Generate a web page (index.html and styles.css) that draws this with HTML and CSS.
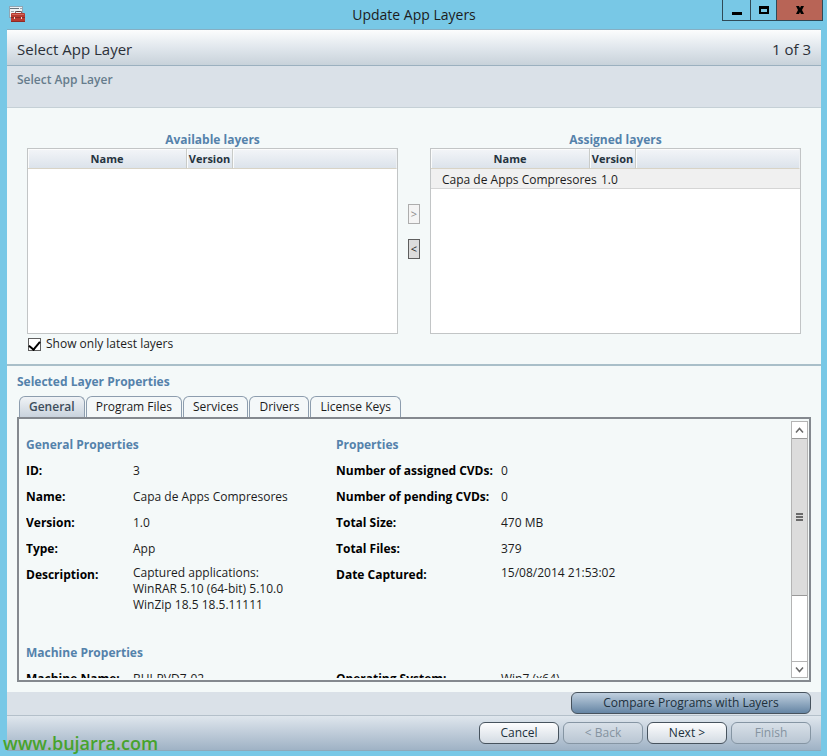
FILE: index.html
```
<!DOCTYPE html>
<html lang="en">
<head>
    <meta charset="UTF-8">
    <meta name="viewport" content="width=device-width, initial-scale=1.0">
    <title>Update App Layers</title>
    <link rel="stylesheet" href="styles.css">
</head>
<body>
    <div class="window">
        <!-- Title bar -->
        <header class="titlebar">
            <svg class="app-icon" width="18" height="18" viewBox="0 0 18 18" aria-hidden="true">
                <rect x="0.5" y="0.5" width="13" height="11" fill="#eef2f5" stroke="#8fa6b4"/>
                <path d="M1 2.5h9" stroke="#68737c"/>
                <path d="M11 2.5h2M2 5.5h3M6 5.5h7M2 8.5h3" stroke="#9aa5ad"/>
                <path d="M6.5 8V6.5q0-1 1-1h4q1 0 1 1V8" fill="none" stroke="#5b3a3c"/>
                <rect x="2" y="7" width="14" height="9" rx="1" fill="#b8392f"/>
                <path d="M3 8.5h12" stroke="#d06a5e"/>
                <path d="M2 11.5h14" stroke="#8a2c27"/>
                <path d="M5 11h1v2H5zM12 11h1v2h-1z" fill="#f0d9d0"/>
                <path d="M2 15.5h14" stroke="#8f2a26"/>
            </svg>
            <h1>Update App Layers</h1>
            <div class="window-buttons">
                <button type="button" class="minimize" aria-label="Minimize">
                    <svg width="12" height="12" viewBox="0 0 12 12"><path d="M1 8h10v3H1z"/></svg>
                </button>
                <button type="button" class="maximize" aria-label="Maximize">
                    <svg width="12" height="12" viewBox="0 0 12 12"><path fill-rule="evenodd" d="M1 2h10v8H1zM3 5v3h6V5z"/></svg>
                </button>
                <button type="button" class="close" aria-label="Close">
                    <svg width="12" height="12" viewBox="0 0 12 12"><path d="M2 2h3l1 2 1-2h3L8 6l2 4H7L6 8l-1 2H2l2-4z"/></svg>
                </button>
            </div>
        </header>

        <main class="wizard">
            <div class="step-header">
                <h2>Select App Layer</h2>
                <span>1 of 3</span>
            </div>
            <div class="step-description">Select App Layer</div>

            <!-- Layer lists -->
            <section class="layers">
                <div class="layer-list">
                    <h3 id="available-title">Available layers</h3>
                    <div class="list-box">
                        <table aria-labelledby="available-title">
                            <thead>
                                <tr>
                                    <th class="col-name">Name</th>
                                    <th class="col-version">Version</th>
                                    <th></th>
                                </tr>
                            </thead>
                        </table>
                    </div>
                    <div class="latest">
                        <input type="checkbox" id="latest" checked>
                        <label for="latest">Show only latest layers</label>
                    </div>
                </div>

                <div class="move-buttons">
                    <button type="button" aria-label="Assign layer" disabled>&gt;</button>
                    <button type="button" aria-label="Remove layer">&lt;</button>
                </div>

                <div class="layer-list">
                    <h3 id="assigned-title">Assigned layers</h3>
                    <div class="list-box">
                        <table aria-labelledby="assigned-title">
                            <thead>
                                <tr>
                                    <th class="col-name">Name</th>
                                    <th class="col-version">Version</th>
                                    <th></th>
                                </tr>
                            </thead>
                            <tbody>
                                <tr>
                                    <td>Capa de Apps Compresores</td>
                                    <td>1.0</td>
                                    <td></td>
                                </tr>
                            </tbody>
                        </table>
                    </div>
                </div>
            </section>

            <!-- Properties of the selected layer -->
            <section class="properties">
                <h3>Selected Layer Properties</h3>
                <div class="tabs" role="tablist">
                    <button type="button" role="tab" aria-selected="true" class="tab active">General</button>
                    <button type="button" role="tab" aria-selected="false" class="tab">Program Files</button>
                    <button type="button" role="tab" aria-selected="false" class="tab">Services</button>
                    <button type="button" role="tab" aria-selected="false" class="tab">Drivers</button>
                    <button type="button" role="tab" aria-selected="false" class="tab">License Keys</button>
                </div>
                <div class="panel" role="tabpanel">
                    <div class="panel-content">
                        <div class="group general">
                            <h3>General Properties</h3>
                            <dl>
                                <dt>ID:</dt><dd>3</dd>
                                <dt>Name:</dt><dd>Capa de Apps Compresores</dd>
                                <dt>Version:</dt><dd>1.0</dd>
                                <dt>Type:</dt><dd>App</dd>
                                <dt>Description:</dt>
                                <dd class="top">Captured applications:<br>WinRAR 5.10 (64-bit) 5.10.0<br>WinZip 18.5 18.5.11111</dd>
                            </dl>
                        </div>
                        <div class="group details">
                            <h3>Properties</h3>
                            <dl>
                                <dt>Number of assigned CVDs:</dt><dd>0</dd>
                                <dt>Number of pending CVDs:</dt><dd>0</dd>
                                <dt>Total Size:</dt><dd>470 MB</dd>
                                <dt>Total Files:</dt><dd>379</dd>
                                <dt>Date Captured:</dt><dd class="top">15/08/2014 21:53:02</dd>
                            </dl>
                        </div>
                        <div class="group general">
                            <h3>Machine Properties</h3>
                            <dl>
                                <dt>Machine Name:</dt><dd>BUJ-PVD7-02</dd>
                            </dl>
                        </div>
                        <div class="group details untitled">
                            <dl>
                                <dt>Operating System:</dt><dd>Win7 (x64)</dd>
                            </dl>
                        </div>
                    </div>
                    <div class="scrollbar">
                        <button type="button" aria-label="Scroll up">
                            <svg width="9" height="7" viewBox="0 0 9 7"><path d="M1 5.5l3.5-4 3.5 4"/></svg>
                        </button>
                        <div class="track">
                            <div class="thumb"><i></i><i></i><i></i></div>
                        </div>
                        <button type="button" aria-label="Scroll down">
                            <svg width="9" height="7" viewBox="0 0 9 7"><path d="M1 1.5l3.5 4 3.5-4"/></svg>
                        </button>
                    </div>
                </div>
            </section>

            <div class="compare-bar">
                <button type="button" class="button compare">Compare Programs with Layers</button>
            </div>

            <footer class="wizard-footer">
                <button type="button" class="button">Cancel</button>
                <button type="button" class="button" disabled>&lt; Back</button>
                <button type="button" class="button">Next &gt;</button>
                <button type="button" class="button" disabled>Finish</button>
            </footer>
        </main>

        <div class="site-mark">www.bujarra.com</div>
    </div>
</body>
</html>
```
FILE: styles.css
```
/* General */
* {
    box-sizing: border-box;
}

body {
    margin: 0;
    font-family: "Open Sans", "Noto Sans", sans-serif;
    font-size: 12px;
    line-height: 16px;
    color: #1c1c1c;
}

h1, h2, h3, dl, dd {
    margin: 0;
}

h3 {
    font-size: 12px;
    font-weight: 700;
    color: #5482ab;
}

button {
    font: inherit;
    color: inherit;
    padding: 0;
}

/* Window */
.window {
    position: relative;
    display: flex;
    flex-direction: column;
    height: 100vh;
    min-height: 600px;
    padding: 0 6px 5px 7px;
    background: #78c8e6;
}

.titlebar {
    display: grid;
    grid-template-columns: 104px 1fr 104px;
    height: 30px;
    border-bottom: 1px solid #86afc3;
}

.app-icon {
    margin: 6px 0 0 2px;
}

.titlebar h1 {
    font-size: 14px;
    font-weight: 400;
    line-height: 30px;
    text-align: center;
}

.window-buttons {
    display: flex;
    height: 21px;
    margin-left: 5px;
    margin-right: -2px;
}

.window-buttons button {
    display: flex;
    align-items: center;
    justify-content: center;
    border: 1px solid #2f4a57;
    border-top: 0;
    border-right: 0;
    background: none;
}

.window-buttons .minimize {
    width: 28px;
}

.window-buttons .maximize {
    width: 26px;
}

.window-buttons .close {
    flex: 1;
    border-right: 1px solid #2f4a57;
    background: #b86456;
}

/* Wizard */
.wizard {
    flex: 1;
    min-height: 0;
    display: flex;
    flex-direction: column;
    background: #f4f9f9;
}

.step-header {
    display: flex;
    justify-content: space-between;
    align-items: center;
    height: 36px;
    padding: 2px 10px 0;
    font-size: 15px;
    color: #2b3038;
    border-bottom: 1px solid #9bb0bf;
    background: linear-gradient(#fcfdfd, #e1e7ed 50%, #c8d2da);
}

.step-header h2 {
    font-size: 15px;
    font-weight: 400;
}

.step-description {
    height: 42px;
    padding: 6px 10px;
    font-weight: 600;
    color: #667c8c;
    border-bottom: 1px solid #c5d0d6;
    background: #dae1e8;
}

/* Layer lists */
.layers {
    display: grid;
    grid-template-columns: 1fr 32px 1fr;
    padding: 23px 20px 10px;
    border-bottom: 2px solid #a9bfc9;
}

.layer-list h3 {
    text-align: center;
    line-height: 17px;
}

.list-box {
    height: 186px;
    border: 1px solid #c2c5c6;
    background: #fff;
}

.list-box table {
    width: 100%;
    table-layout: fixed;
    border-collapse: separate;
    border-spacing: 0;
}

.list-box th {
    height: 20px;
    padding: 0;
    font-size: 11px;
    font-weight: 700;
    color: #253340;
    border-right: 1px solid #c9cbc8;
    border-bottom: 1px solid #d8d3c6;
    background: linear-gradient(#f3f5f8, #dce3eb);
    box-shadow: inset 1px 1px 0 #fbfcfc;
}

.list-box th:last-child {
    border-right-color: #eef1f4;
}

.col-name {
    width: 159px;
}

.col-version {
    width: 46px;
}

.list-box td {
    height: 20px;
    padding: 2px 0 0 11px;
    white-space: nowrap;
    border-bottom: 1px solid #d5d5d5;
    background: #f0f0f0;
}

.latest {
    display: flex;
    align-items: center;
    gap: 5px;
    height: 20px;
    padding-left: 1px;
}

.latest input {
    appearance: none;
    display: grid;
    place-items: center;
    width: 13px;
    height: 13px;
    margin: 0;
    border: 1px solid #606060;
    background: #fff;
}

.latest input:checked::before {
    content: "";
    width: 5px;
    height: 9px;
    margin-bottom: 2px;
    border: solid #000;
    border-width: 0 2px 2px 0;
    transform: rotate(40deg);
}

.move-buttons {
    display: flex;
    flex-direction: column;
    align-items: center;
    gap: 15px;
    padding-top: 73px;
}

.move-buttons button {
    width: 12px;
    height: 20px;
    font-size: 11px;
    line-height: 18px;
    border: 1px solid #5e5e5e;
    background: #dcdcdc;
}

.move-buttons button:disabled {
    color: #8a8a8a;
    border-color: #adadad;
    background: #f4f4f4;
}

/* Properties */
.properties {
    flex: 1;
    min-height: 0;
    display: flex;
    flex-direction: column;
    padding: 8px 10px 10px;
}

.tabs {
    display: flex;
    gap: 1px;
    height: 21px;
    margin-top: 6px;
    padding-left: 2px;
}

.tab {
    padding: 0 9px;
    border: 1px solid #8d9dae;
    border-bottom: 0;
    border-radius: 6px 6px 0 0;
    background: #f4f8f9;
}

.tab.active {
    font-weight: 600;
    color: #3d4c5a;
    background: linear-gradient(#f0f3f6, #c9d3dd);
}

.panel {
    flex: 1;
    min-height: 0;
    display: flex;
    padding: 2px 1px 2px 7px;
    border: 2px solid #84898f;
}

.panel-content {
    flex: 1;
    display: grid;
    grid-template-columns: 310px 1fr;
    align-content: start;
    row-gap: 32px;
    padding-top: 16px;
    overflow: hidden;
}

.group dl {
    display: grid;
    margin-top: 5px;
    line-height: 26px;
}

.group.general dl {
    grid-template-columns: 107px 1fr;
}

.group.details dl {
    grid-template-columns: 165px 1fr;
}

.group.untitled {
    padding-top: 16px;
}

.group dt {
    font-weight: 700;
    color: #000;
    white-space: nowrap;
}

.group dd.top {
    padding-top: 3px;
    line-height: 16px;
}

/* Scrollbar */
.scrollbar {
    display: flex;
    flex-direction: column;
    width: 17px;
    border: 1px solid #b4b4b4;
    background: #fff;
}

.scrollbar button {
    display: flex;
    align-items: center;
    justify-content: center;
    height: 16px;
    border: 0;
    background: #fff;
}

.scrollbar button:last-child {
    border-top: 1px solid #b4b4b4;
}

.scrollbar path {
    fill: none;
    stroke: #6a6a6a;
    stroke-width: 1.5;
}

.track {
    flex: 1;
}

.thumb {
    display: flex;
    flex-direction: column;
    align-items: center;
    justify-content: center;
    gap: 1px;
    height: 71%;
    border: solid #999;
    border-width: 1px 0;
    background: #dcdcdc;
}

.thumb i {
    width: 7px;
    height: 2px;
    background: #6a6a6a;
}

/* Bottom bars */
.compare-bar {
    display: flex;
    justify-content: flex-end;
    height: 24px;
    padding-right: 10px;
    border-bottom: 1px solid #b4c0ca;
    background: #dae1e8;
}

.wizard-footer {
    display: flex;
    justify-content: flex-end;
    gap: 4px;
    height: 35px;
    padding: 6px 10px 0;
    border-bottom: 1px solid #8fa9ba;
    background: linear-gradient(#dfe6ed, #9fb2c5);
}

.button {
    width: 80px;
    height: 22px;
    color: #20303c;
    border: 1px solid #47535e;
    border-radius: 6px;
    background: linear-gradient(#fdfdfe, #d3dbe3);
}

.button:disabled {
    color: #8593a0;
    border-color: #8595a3;
    background: linear-gradient(#d8e0e8, #b9c6d3);
}

.button.compare {
    width: 240px;
    background: linear-gradient(#c0d0df, #6585a4);
}

/* Site mark */
.site-mark {
    position: absolute;
    left: 3px;
    bottom: 2px;
    font-size: 18px;
    line-height: 22px;
    font-weight: 600;
    color: #47a32c;
}
```
